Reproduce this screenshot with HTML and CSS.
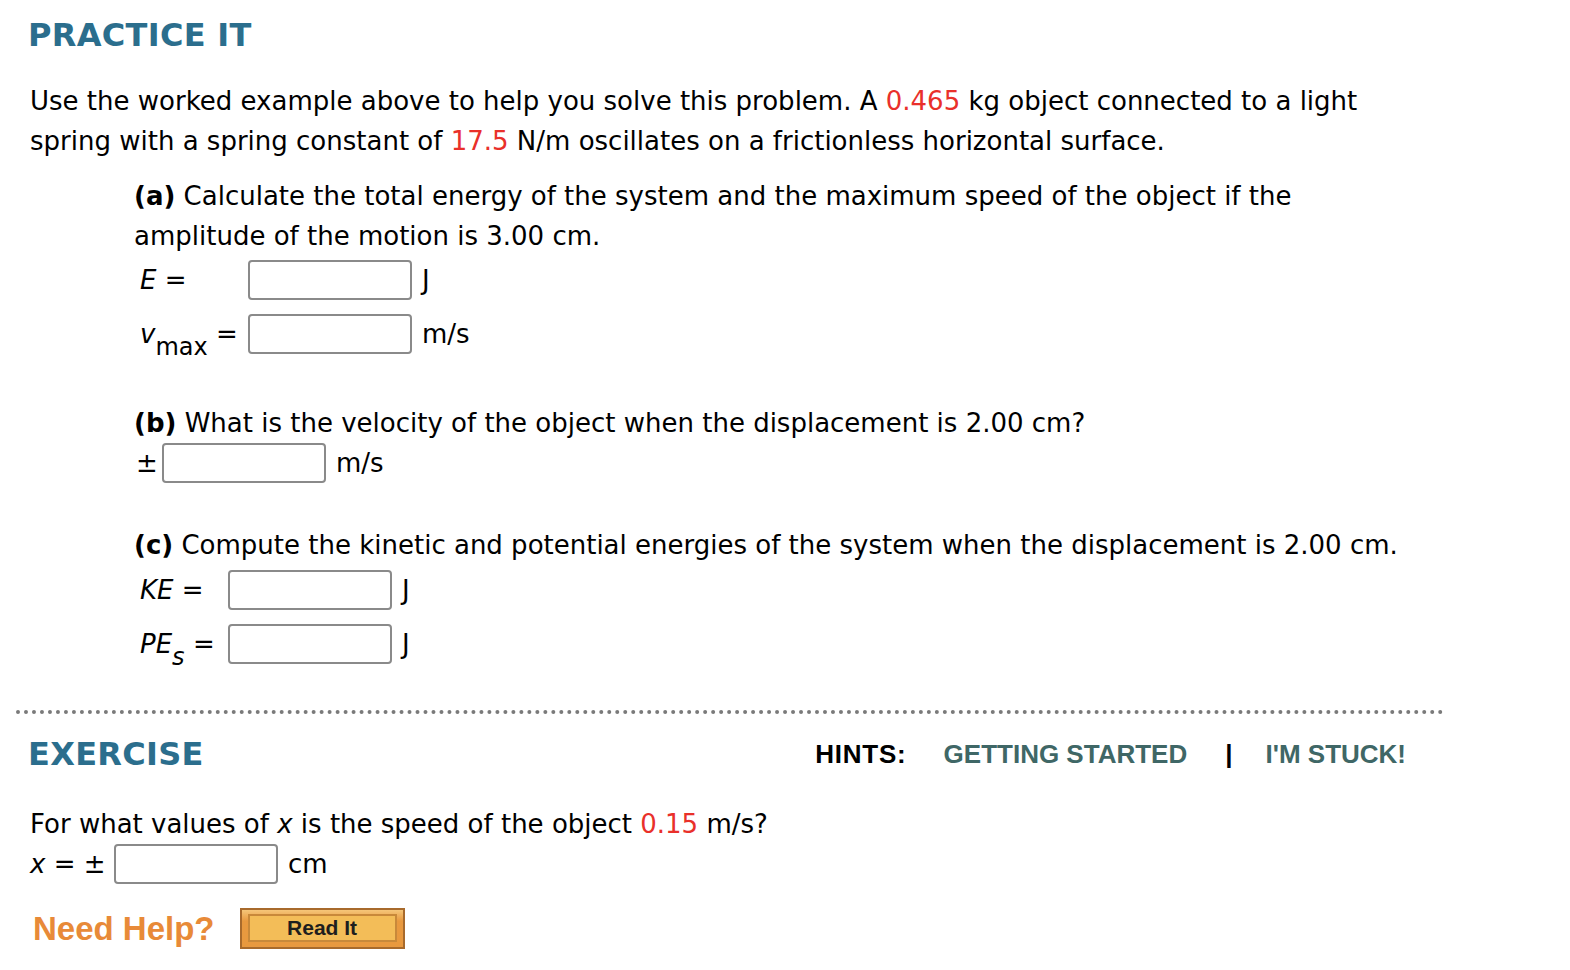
FILE: index.html
```html
<!DOCTYPE html>
<html>
<head>
<meta charset="utf-8">
<link rel="stylesheet" href="styles.css">
</head>
<body>
<div class="page">
  <h2 class="heading practice">PRACTICE IT</h2>
  <p class="intro">Use the worked example above to help you solve this problem. A <span class="red">0.465</span> kg object connected to a light spring with a spring constant of <span class="red">17.5</span> N/m oscillates on a frictionless horizontal surface.</p>

  <div class="part part-a">
    <p class="q"><b>(a)</b> Calculate the total energy of the system and the maximum speed of the object if the amplitude of the motion is 3.00 cm.</p>
    <div class="row">
      <span class="lbl lbl-a"><i>E</i> =</span>
      <span class="box"></span>
      <span class="unit">J</span>
    </div>
    <div class="row">
      <span class="lbl lbl-a"><i>v</i><sub>max</sub> =</span>
      <span class="box"></span>
      <span class="unit">m/s</span>
    </div>
  </div>

  <div class="part part-b">
    <p class="q"><b>(b)</b> What is the velocity of the object when the displacement is 2.00 cm?</p>
    <div class="row">
      <span class="lbl">±</span>
      <span class="box"></span>
      <span class="unit">m/s</span>
    </div>
  </div>

  <div class="part part-c">
    <p class="q"><b>(c)</b> Compute the kinetic and potential energies of the system when the displacement is 2.00 cm.</p>
    <div class="row">
      <span class="lbl lbl-c"><i>KE</i> =</span>
      <span class="box"></span>
      <span class="unit">J</span>
    </div>
    <div class="row">
      <span class="lbl lbl-c"><i>PE</i><sub><i>s</i></sub> =</span>
      <span class="box"></span>
      <span class="unit">J</span>
    </div>
  </div>

  <div class="divider"></div>

  <div class="exercise-head">
    <h2 class="heading">EXERCISE</h2>
    <div class="hints">
      <span class="hints-label">HINTS:</span>
      <span class="hint">GETTING STARTED</span>
      <span class="sep">|</span>
      <span class="hint">I'M STUCK!</span>
    </div>
  </div>

  <p class="ex-q">For what values of <i>x</i> is the speed of the object <span class="red">0.15</span> m/s?</p>
  <div class="row ex-row">
    <span class="lbl"><i>x</i> = ±</span>
    <span class="box"></span>
    <span class="unit">cm</span>
  </div>

  <div class="help">
    <span class="need">Need Help?</span>
    <span class="btn"><span class="btn-inner">Read It</span></span>
  </div>
</div>
</body>
</html>
```

FILE: styles.css
```css
html, body {
  margin: 0;
  padding: 0;
  background: #fff;
}
body {
  font-family: "DejaVu Sans", Verdana, sans-serif;
  font-size: 26px;
  color: #000;
}
.page {
  padding: 16px 0 0 16px;
  width: 1430px;
}
.heading {
  margin: 0;
  font-family: "DejaVu Sans", Verdana, sans-serif;
  font-weight: bold;
  font-size: 32px;
  letter-spacing: 0.3px;
  color: #2b6e8d;
  padding-left: 12px;
  line-height: 38px;
}
.intro {
  margin: 27px 0 0 14px;
  line-height: 40px;
  width: 1380px;
}
.red { color: #e9302a; }
.part {
  margin-left: 118px;
  width: 1275px;
}
.q {
  margin: 0;
  line-height: 40px;
}
.part-a { margin-top: 15px; }
.part-b { margin-top: 49px; }
.part-c { margin-top: 42px; }
.row {
  display: flex;
  align-items: center;
  height: 40px;
  margin-top: 14px;
}
.part-a .q + .row { margin-top: 4px; }
.part-b .q + .row { margin-top: 0; }
.part-c .q + .row { margin-top: 5px; }
.lbl {
  display: inline-block;
  white-space: nowrap;
  padding-left: 2px;
}
.lbl sub {
  font-size: 24px;
  vertical-align: -12px;
  line-height: 0;
}
.lbl-a { width: 114px; padding-left: 6px; box-sizing: border-box; }
.lbl-c { width: 94px; padding-left: 6px; box-sizing: border-box; }
.part-b .lbl { width: 28px; box-sizing: border-box; }
.box {
  display: inline-block;
  width: 164px;
  height: 40px;
  box-sizing: border-box;
  border: 2px solid #8a8a8a;
  border-radius: 4px;
  background: #fff;
}
.unit {
  margin-left: 10px;
}
.divider {
  margin-top: 46px;
  height: 0;
  border-top: 4px dotted #7a7a7a;
  width: 1428px;
}
.exercise-head {
  display: flex;
  align-items: center;
  justify-content: space-between;
  margin-top: 20px;
  height: 40px;
}
.hints {
  display: flex;
  align-items: center;
  font-family: "Liberation Sans", Arial, sans-serif;
  font-weight: bold;
  font-size: 26px;
  margin-right: 40px;
}
.hints-label { color: #000; margin-right: 37px; letter-spacing: 0.8px; }
.hint { color: #3f6766; }
.sep { color: #000; margin: 0 33px 0 38px; }
.ex-q {
  margin: 30px 0 0 14px;
  line-height: 40px;
}
.ex-row {
  margin-top: 0;
  margin-left: 12px;
}
.ex-row .lbl { width: 84px; padding-left: 2px; }
.help {
  display: flex;
  align-items: center;
  margin: 24px 0 0 17px;
}
.need {
  font-family: "Liberation Sans", Arial, sans-serif;
  font-weight: bold;
  font-size: 33px;
  color: #e88a38;
  margin-right: 25px;
}
.btn {
  display: inline-flex;
  width: 165px;
  height: 41px;
  box-sizing: border-box;
  border: 2px solid #a86a2c;
  background: linear-gradient(#f5c679, #e8993f 30%, #e8993f);
  padding: 4px 6px 5px 6px;
}
.btn-inner {
  flex: 1;
  display: flex;
  align-items: center;
  justify-content: center;
  border: 2px solid #c8893a;
  background: #f3bd58;
  font-family: "Liberation Sans", Arial, sans-serif;
  font-weight: bold;
  font-size: 21px;
  color: #1e1e1e;
}
```
